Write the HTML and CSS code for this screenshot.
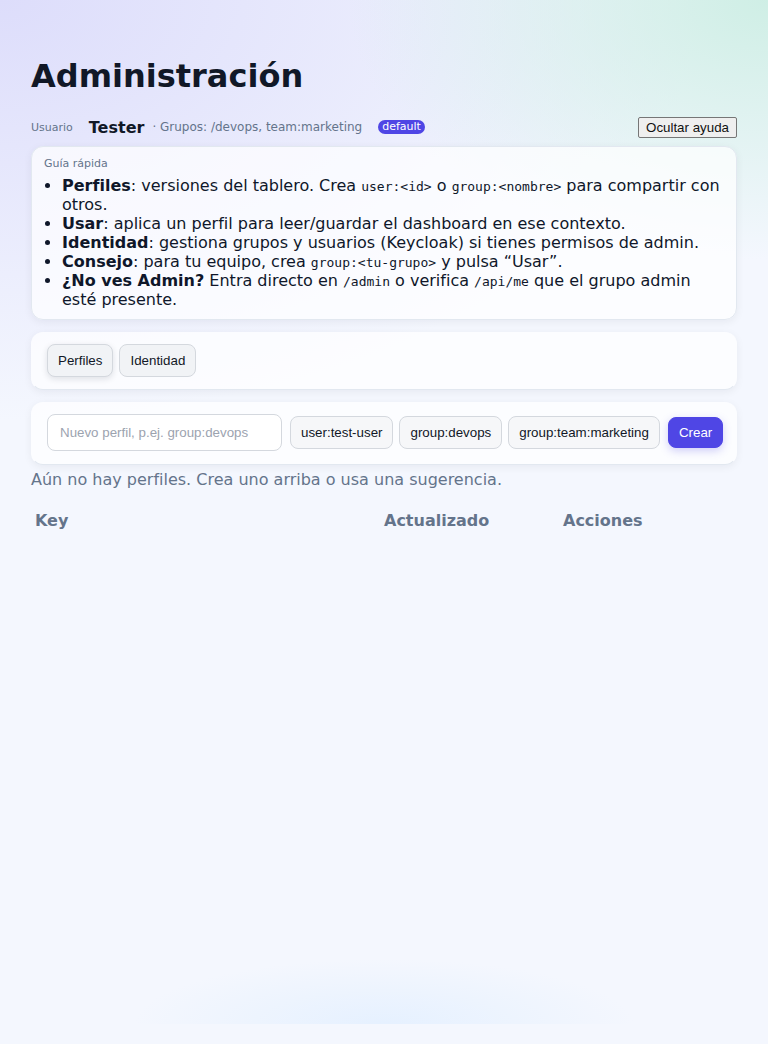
FILE: index.html
```html
<!DOCTYPE html>
<html lang="es">
<head>
<meta charset="utf-8">
<title>Administración</title>
<link rel="stylesheet" href="styles.css">
</head>
<body>
<div class="page">
  <h1 class="title">Administración</h1>
  <div class="userbar">
    <span class="user-label">Usuario</span>
    <span class="user-name">Tester</span>
    <span class="user-groups">· Grupos: /devops, team:marketing</span>
    <span class="badge">default</span>
    <button class="help-toggle">Ocultar ayuda</button>
  </div>

  <div class="card guide">
    <div class="guide-title">Guía rápida</div>
    <ul class="guide-list">
      <li><b>Perfiles</b>: versiones del tablero. Crea <code>user:&lt;id&gt;</code> o <code>group:&lt;nombre&gt;</code> para compartir con otros.</li>
      <li><b>Usar</b>: aplica un perfil para leer/guardar el dashboard en ese contexto.</li>
      <li><b>Identidad</b>: gestiona grupos y usuarios (Keycloak) si tienes permisos de admin.</li>
      <li><b>Consejo</b>: para tu equipo, crea <code>group:&lt;tu-grupo&gt;</code> y pulsa “Usar”.</li>
      <li><b>¿No ves Admin?</b> Entra directo en <code>/admin</code> o verifica <code>/api/me</code> que el grupo admin esté presente.</li>
    </ul>
  </div>

  <div class="card tabs">
    <button class="btn tab active">Perfiles</button>
    <button class="btn tab">Identidad</button>
  </div>

  <div class="card create">
    <input class="input" type="text" placeholder="Nuevo perfil, p.ej. group:devops">
    <button class="btn chip">user:test-user</button>
    <button class="btn chip">group:devops</button>
    <button class="btn chip">group:team:marketing</button>
    <button class="btn primary">Crear</button>
  </div>

  <p class="empty">Aún no hay perfiles. Crea uno arriba o usa una sugerencia.</p>

  <table class="table">
    <thead>
      <tr>
        <th class="col-key">Key</th>
        <th class="col-upd">Actualizado</th>
        <th class="col-act">Acciones</th>
      </tr>
    </thead>
  </table>
</div>
</body>
</html>
```

FILE: styles.css
```css
html, body {
  margin: 0;
  padding: 0;
}
body {
  min-height: 1044px;
  background-color: #f4f7fe;
  background-image:
    radial-gradient(ellipse 250px 65px at 50% 1024px, rgba(228, 240, 255, 0.9), rgba(228, 240, 255, 0) 100%),
    radial-gradient(ellipse 420px 260px at 100% 0%, rgba(205, 238, 228, 0.95), rgba(205, 238, 228, 0) 100%),
    radial-gradient(ellipse 700px 420px at 0% 0%, rgba(221, 221, 251, 1), rgba(221, 221, 251, 0) 100%);
  background-repeat: no-repeat;
  background-size: 100% 1024px;
  font-family: "DejaVu Sans", sans-serif;
  color: #0f172a;
}
.page {
  padding: 56px 31px 40px;
}
.title {
  margin: 0;
  font-size: 32px;
  line-height: 40px;
  font-weight: 700;
  color: #111827;
}
.userbar {
  display: flex;
  align-items: center;
  margin-top: 19px;
  height: 24px;
}
.user-label {
  font-size: 11px;
  color: #64748b;
}
.user-name {
  margin-left: 16px;
  font-size: 16px;
  font-weight: 700;
  color: #111827;
}
.user-groups {
  margin-left: 8px;
  font-size: 12px;
  color: #64748b;
}
.badge {
  margin-left: 16px;
  background: #4f46e5;
  color: #fff;
  font-size: 11px;
  line-height: 14px;
  padding: 0 4px;
  border-radius: 8px;
}
.help-toggle {
  margin-left: auto;
  font-family: "Liberation Sans", Arial, sans-serif;
  font-size: 13.33px;
  padding: 2px 7px;
  height: 21px;
  border: 1px solid #767676;
  border-radius: 2px;
  background: #efefef;
  color: #111;
}
.card {
  background: rgba(255, 255, 255, 0.7);
  border: 1px solid #e2e8f0;
  border-radius: 12px;
  box-shadow: 0 2px 8px rgba(15, 23, 42, 0.06);
}
.guide {
  margin-top: 7px;
  padding: 10px 12px 10px;
}
.guide-title {
  font-size: 11px;
  line-height: 14px;
  color: #64748b;
}
.guide-list {
  margin: 5px 0 0;
  padding-left: 18px;
  font-size: 16px;
  line-height: 19px;
}
.guide-list li {
  line-height: 19px;
}
.guide-list code {
  font-family: "DejaVu Sans Mono", monospace;
  font-size: 13px;
  line-height: 1;
}
.tabs {
  margin-top: 12px;
  padding: 11px 15px 12px;
  display: flex;
  gap: 6px;
  border-color: transparent;
  border-bottom-color: #e2e8f0;
}
.btn {
  font-family: "Liberation Sans", Arial, sans-serif;
  font-size: 13.33px;
  color: #111827;
  background: #f1f3f6;
  border: 1px solid #d4d8de;
  border-radius: 8px;
  padding: 0 10px;
  height: 33px;
  white-space: nowrap;
  flex-shrink: 0;
}
.tab.active {
  box-shadow: 0 2px 6px rgba(15, 23, 42, 0.12);
}
.create {
  margin-top: 12px;
  padding: 11px 15px 13px;
  display: flex;
  align-items: center;
  gap: 6px;
  border-color: transparent;
  border-bottom-color: #e2e8f0;
}
.input {
  width: 235px;
  flex-shrink: 0;
  height: 37px;
  box-sizing: border-box;
  margin-right: 2px;
  padding: 0 12px;
  border: 1px solid #d4d8de;
  border-radius: 8px;
  background: #fff;
  font-family: "Liberation Sans", Arial, sans-serif;
  font-size: 13.33px;
}
.input::placeholder {
  color: #9ca3af;
}
.chip {
  background: #f6f7f9;
}
.primary {
  height: 31px;
  margin-left: 2px;
  background: #4f46e5;
  border-color: #4f46e5;
  color: #fff;
  box-shadow: 0 3px 8px rgba(79, 70, 229, 0.25);
}
.empty {
  margin: 5px 0 0;
  font-size: 16px;
  line-height: 20px;
  color: #64748b;
}
.table {
  margin-top: 17px;
  width: 100%;
  border-collapse: collapse;
}
.table th {
  text-align: left;
  font-size: 16px;
  font-weight: 700;
  color: #64748b;
  padding: 4px 4px;
}
.col-key { width: 341px; }
.col-upd { width: 171px; }
```
